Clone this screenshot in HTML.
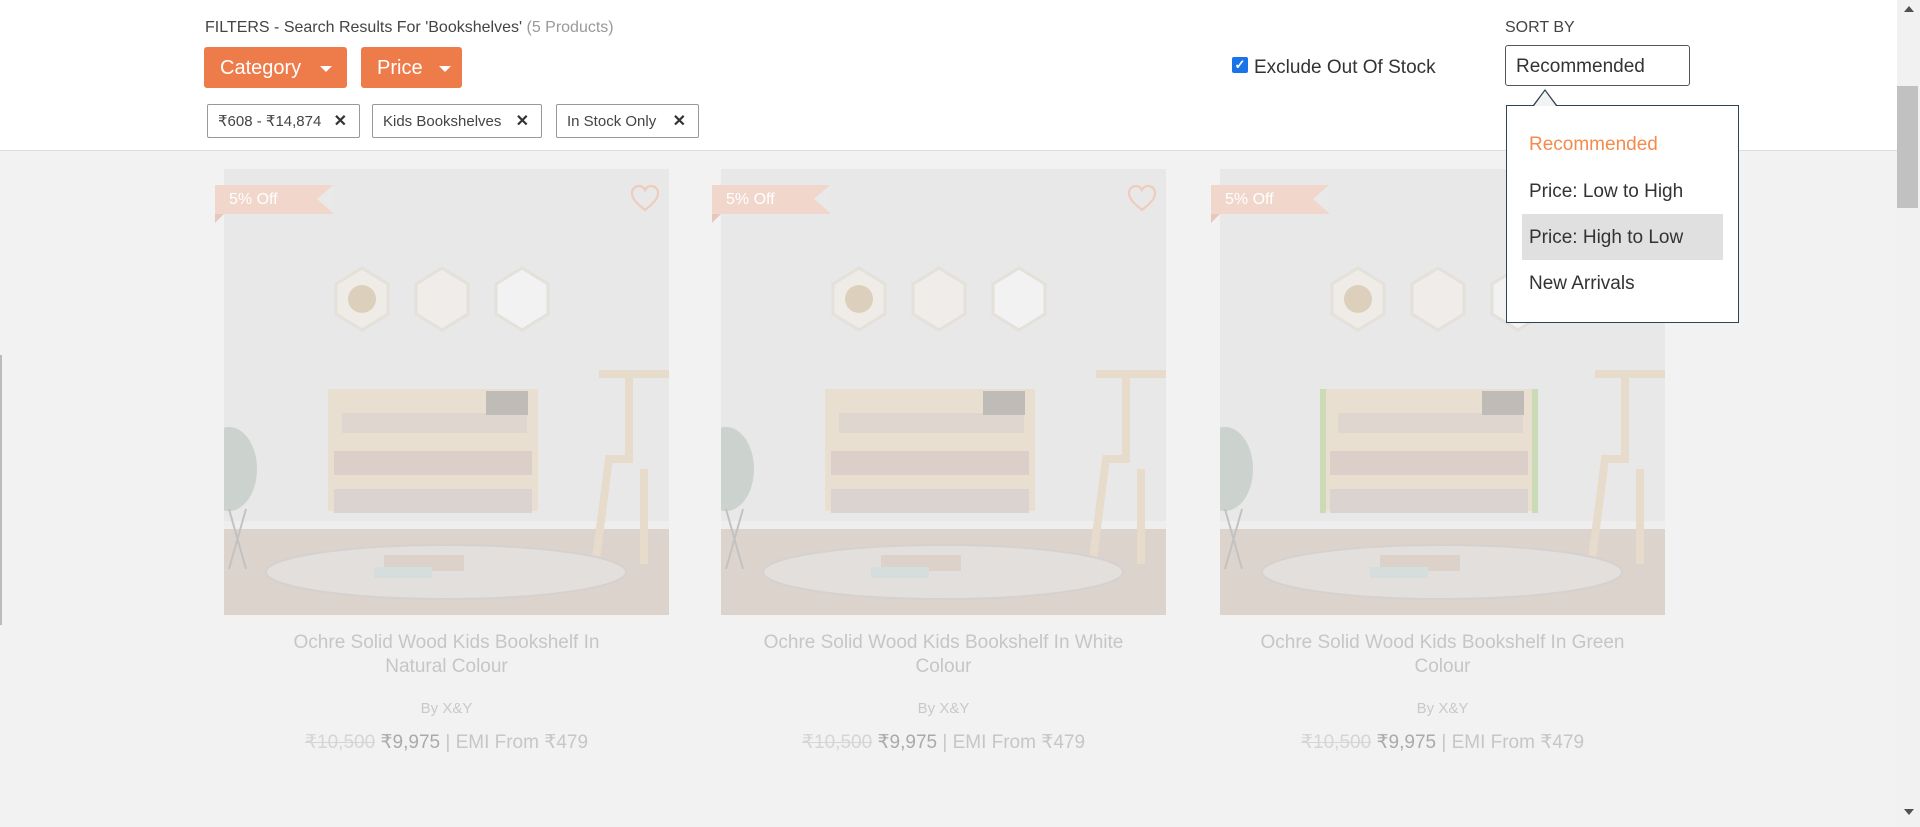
<!DOCTYPE html>
<html><head><meta charset="utf-8"><style>
*{box-sizing:border-box;margin:0;padding:0}
body{width:1920px;height:827px;overflow:hidden;background:#f2f2f2;font-family:"Liberation Sans",sans-serif;position:relative;color:#333}
.hdr{position:absolute;left:0;top:0;width:1897px;height:151px;background:#fff;border-bottom:1px solid #ddd}
.a{position:absolute;white-space:nowrap}
.btn{position:absolute;top:47px;height:41px;background:#ee7b4a;border-radius:3px;color:#fff;font-size:20px;line-height:43px;padding-left:16px}
.btn i{position:absolute;top:19px;border-left:6px solid transparent;border-right:6px solid transparent;border-top:6px solid #fff}
.chip{position:absolute;top:104px;height:34px;border:1px solid #999;border-radius:2px;font-size:15px;line-height:34px;padding-left:10px;color:#444;white-space:nowrap}
.chip b{position:absolute;right:12px;top:0;font-size:16px;color:#333}
.card{position:absolute;top:169px;width:445px;height:446px;background:#e9e9e9;overflow:hidden}
.badge{position:absolute;top:185px;width:118px;height:29px;background:#f1d6cb;color:#fff;font-size:16px;line-height:30px;padding-left:14px}
.badge:after{content:"";position:absolute;right:0;top:0;border-top:14.5px solid transparent;border-bottom:14.5px solid transparent;border-right:16px solid #e9e9e9}
.badge:before{content:"";position:absolute;left:0;top:29px;border-left:9px solid #e6c9bd;border-bottom:9px solid transparent}
.t{position:absolute;width:445px;text-align:center;color:#c6c6c6}
.dd div{position:absolute;left:0;font-size:19px;padding-left:22px;white-space:nowrap}
</style></head><body>
<div class="hdr">
 <div class="a" style="left:205px;top:19px;font-size:16px;color:#444">FILTERS - Search Results For 'Bookshelves' <span style="color:#999">(5 Products)</span></div>
 <div class="btn" style="left:204px;width:143px">Category<i style="left:116px"></i></div>
 <div class="btn" style="left:361px;width:101px">Price<i style="left:78px"></i></div>
 <div class="chip" style="left:207px;width:153px">₹608 - ₹14,874<b>✕</b></div>
 <div class="chip" style="left:372px;width:170px">Kids Bookshelves<b>✕</b></div>
 <div class="chip" style="left:556px;width:143px">In Stock Only<b>✕</b></div>
 <div class="a" style="left:1232px;top:57px;width:16px;height:16px;background:#1a73e8;border-radius:2px;color:#fff;font-size:13px;line-height:16px;text-align:center;font-weight:bold">✓</div>
 <div class="a" style="left:1254px;top:57px;font-size:19px;color:#333">Exclude Out Of Stock</div>
 <div class="a" style="left:1505px;top:19px;font-size:16px;color:#444">SORT BY</div>
 <div class="a" style="left:1505px;top:45px;width:185px;height:41px;border:1px solid #555;border-radius:3px;font-size:19px;line-height:41px;padding-left:10px;color:#333">Recommended</div>
</div>
<div class="a" style="left:1897px;top:0;width:23px;height:827px;background:#f1f1f1"></div>
<div class="a" style="left:1897px;top:86px;width:21px;height:122px;background:#c1c1c1"></div>
<div class="a" style="left:1904px;top:6px;border-left:5px solid transparent;border-right:5px solid transparent;border-bottom:6px solid #505050"></div>
<div class="a" style="left:1904px;top:809px;border-left:5px solid transparent;border-right:5px solid transparent;border-top:6px solid #505050"></div>
<div class="a" style="left:0;top:355px;width:2px;height:270px;background:#bbb"></div>

<div id="cards"></div>
<script>
var xs=[224,721,1220],ts=[["Ochre Solid Wood Kids Bookshelf In","Natural Colour"],["Ochre Solid Wood Kids Bookshelf In White","Colour"],["Ochre Solid Wood Kids Bookshelf In Green","Colour"]];
var h="";
function hex(cx,cy,f){return '<polygon points="'+(cx-26)+','+(cy-15)+' '+cx+','+(cy-31)+' '+(cx+26)+','+(cy-15)+' '+(cx+26)+','+(cy+15)+' '+cx+','+(cy+31)+' '+(cx-26)+','+(cy+15)+'" fill="'+f+'" stroke="#e4e0da" stroke-width="3"/>';}
xs.forEach(function(x,i){
h+='<div class="card" style="left:'+x+'px"><svg width="445" height="446">'+
'<rect width="445" height="446" fill="#e8e8e8"/><rect y="352" width="445" height="8" fill="#eeeeee"/><rect y="360" width="445" height="86" fill="#ddd3cd"/>'+
hex(138,130,'#efece7')+'<circle cx="138" cy="130" r="14" fill="#dcd0bc"/>'+hex(218,130,'#efece9')+hex(298,130,'#f2f2f2')+
'<rect x="104" y="220" width="210" height="122" fill="#e9dfd0"/>'+
'<rect x="118" y="244" width="185" height="20" fill="#dfd7cf"/><rect x="110" y="282" width="198" height="24" fill="#dccfca"/><rect x="110" y="320" width="198" height="24" fill="#dbd3cf"/>'+
'<rect x="262" y="222" width="42" height="24" fill="#bfbcb8"/>'+
(i==2?'<rect x="100" y="220" width="6" height="124" fill="#cbdbb6"/><rect x="312" y="220" width="6" height="124" fill="#cbdbb6"/>':'')+
'<path d="M375,205 L445,205 M405,205 L405,290 L385,290 L370,405 M420,300 L420,395" stroke="#e7dccb" stroke-width="8" fill="none"/>'+
'<ellipse cx="5" cy="300" rx="28" ry="42" fill="#ccd2cd"/><path d="M5,340 L22,400 M22,340 L5,400" stroke="#c2c2c2" stroke-width="2"/>'+
'<ellipse cx="222" cy="403" rx="180" ry="27" fill="#e3dfdd" stroke="#d5d1ce" stroke-width="2"/><rect x="160" y="386" width="80" height="16" fill="#ddd2c9"/><rect x="150" y="398" width="58" height="11" fill="#d5dedc"/>'+
'</svg></div>';
h+='<div class="badge" style="left:'+(x-9)+'px">5% Off</div>';
h+='<svg class="a" style="left:'+(x+406)+'px;top:184px" width="30" height="28" viewBox="0 0 30 28"><path d="M15,26 C5,18 2,14 2,9 C2,5 5,2 9,2 C12,2 14,4 15,6 C16,4 18,2 21,2 C25,2 28,5 28,9 C28,14 25,18 15,26 Z" fill="none" stroke="#f0cbbd" stroke-width="2.2"/></svg>';
h+='<div class="t" style="left:'+x+'px;top:631px;font-size:19px;line-height:24px">'+ts[i][0]+'<br>'+ts[i][1]+'</div>';
h+='<div class="t" style="left:'+x+'px;top:700px;font-size:15px;color:#c9c9c9">By X&amp;Y</div>';
h+='<div class="t" style="left:'+x+'px;top:731px;font-size:19px"><s style="color:#d5d5d5">₹10,500</s> <span style="color:#aaa">₹9,975</span> | EMI From ₹479</div>';
});
document.getElementById("cards").innerHTML=h;
</script>

<div class="a dd" style="left:1506px;top:105px;width:233px;height:218px;background:#fff;border:1px solid #2e4453">
 <div style="top:28px;color:#f58a4b">Recommended</div>
 <div style="top:75px;color:#333">Price: Low to High</div>
 <div style="top:108px;left:15px;width:201px;height:46px;background:#e0e0e0;padding-left:7px;line-height:48px;color:#333">Price: High to Low</div>
 <div style="top:167px;color:#333">New Arrivals</div>
</div>
<div class="a" style="left:1533px;top:89px;border-left:12px solid transparent;border-right:12px solid transparent;border-bottom:16px solid #2e4453"></div>
<div class="a" style="left:1534px;top:91px;border-left:11px solid transparent;border-right:11px solid transparent;border-bottom:15px solid #f2f4f4"></div>
</body></html>
